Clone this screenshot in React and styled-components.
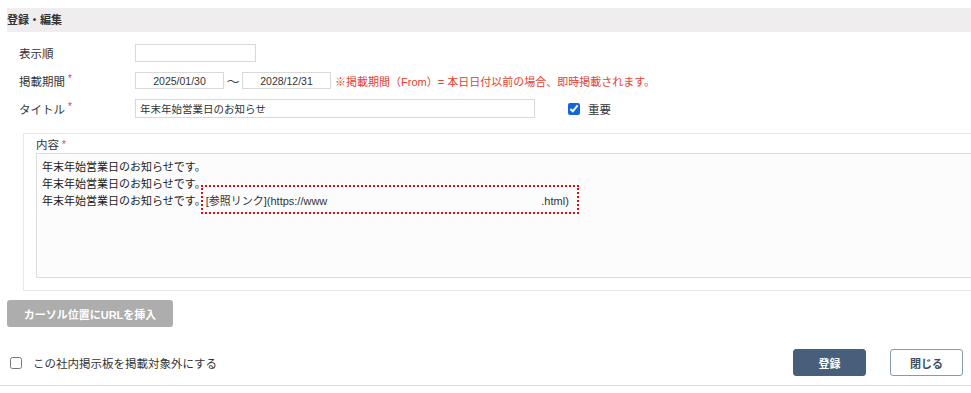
import React from "react"
import styled, { createGlobalStyle } from "styled-components";

const GlobalStyle = createGlobalStyle`
  html, body {
    margin: 0;
    padding: 0;
    background: #fff;
    overflow: hidden;
  }
  body {
    font-family: "Liberation Sans", "Noto Sans CJK JP", sans-serif;
    color: #333;
    font-size: 11px;
  }
`

const Page = styled.div`
  width: 971px;
  padding: 8px 0 0 7px;
  box-sizing: border-box;
  overflow: hidden;
`

const SectionHeader = styled.div`
  height: 24px;
  line-height: 24px;
  background: #efeded;
  font-weight: bold;
  font-size: 11px;
  color: #333;
`

const FormGrid = styled.div`
  display: grid;
  grid-template-columns: 116px 1fr;
  row-gap: 9px;
  align-items: center;
  margin-top: 12px;
  padding-left: 12px;
`

const Label = styled.div`
  font-size: 11.5px;
  color: #333;
`

const Required = styled.span`
  color: #e53e30;
  margin-left: 3px;
  font-size: 10px;
  vertical-align: top;
`

const Field = styled.div`
  display: flex;
  align-items: center;
`

const TextInput = styled.input`
  box-sizing: border-box;
  width: ${p => p.$w}px;
  height: ${p => p.$h || 18}px;
  border: 1px solid #d9d9d9;
  padding: 0 4px;
  font-family: "Liberation Sans", "Noto Sans CJK JP", sans-serif;
  font-size: 10.5px;
  color: #333;
  text-align: ${p => (p.$center ? "center" : "left")};
  outline: none;
  background: #fff;
`

const Tilde = styled.span`
  width: 18px;
  text-align: center;
  font-size: 13px;
  color: #444;
`

const Note = styled.span`
  margin-left: 4px;
  color: #e53e30;
  font-size: 11px;
`

const CheckLabel = styled.label`
  display: flex;
  align-items: center;
  margin-left: ${p => p.$ml || 0}px;
  font-size: 11.5px;
  color: #333;
  gap: ${p => p.$gap || 8}px;
`

const Check = styled.input`
  width: 12px;
  height: 12px;
  margin: 0;
  accent-color: #1267d6;
`

const ContentBox = styled.div`
  margin: 15px 0 0 16px;
  width: 1000px;
  border: 1px solid #e8e8e8;
  padding: 3px 0 12px 12px;
`

const ContentLabel = styled.div`
  height: 16px;
  line-height: 16px;
  font-size: 11.5px;
`

const Editor = styled.div`
  box-sizing: border-box;
  height: 125px;
  border: 1px solid #dcdcdc;
  background: #fcfcfc;
  padding: 5px 5px;
  font-size: 11px;
  line-height: 17px;
  color: #222;
`

const LinkText = styled.span`
  position: relative;
  color: #333;

  &::after {
    content: "";
    position: absolute;
    left: -5px;
    right: -10px;
    top: -10px;
    bottom: -7px;
    border: 2px dotted #d90f0f;
  }
`

const LinkGap = styled.span`
  display: inline-block;
  width: 214px;
`

const InsertButton = styled.button`
  display: block;
  margin-top: 9px;
  width: 166px;
  height: 27px;
  border: none;
  border-radius: 3px;
  background: #adadad;
  color: #fff;
  font-family: "Liberation Sans", "Noto Sans CJK JP", sans-serif;
  font-size: 11px;
  font-weight: bold;
`

const Footer = styled.div`
  display: flex;
  align-items: center;
  justify-content: space-between;
  margin: 22px 0 0 -7px;
  padding: 0 8px 9px 10px;
  border-bottom: 1px solid #dcdcdc;
`

const Actions = styled.div`
  display: flex;
  gap: 24px;
`

const ActionButton = styled.button`
  width: 73px;
  height: 27px;
  border-radius: 3px;
  border: 1px solid ${p => (p.$primary ? "#475f7b" : "#8799ae")};
  background: ${p => (p.$primary ? "#475f7b" : "#fff")};
  color: ${p => (p.$primary ? "#fff" : "#3e4c5e")};
  font-family: "Liberation Sans", "Noto Sans CJK JP", sans-serif;
  font-size: 11px;
  font-weight: bold;
`

const App = () => {
  return (
    <Page>
      <GlobalStyle />
      <SectionHeader>登録・編集</SectionHeader>

      <FormGrid>
        <Label>表示順</Label>
        <Field>
          <TextInput $w={121} defaultValue="" />
        </Field>

        <Label>掲載期間<Required>*</Required></Label>
        <Field>
          <TextInput $w={89} $h={17} $center defaultValue="2025/01/30" />
          <Tilde>〜</Tilde>
          <TextInput $w={89} $h={17} $center defaultValue="2028/12/31" />
          <Note>※掲載期間（From）= 本日日付以前の場合、即時掲載されます。</Note>
        </Field>

        <Label>タイトル<Required>*</Required></Label>
        <Field>
          <TextInput $w={400} $h={19} defaultValue="年末年始営業日のお知らせ" />
          <CheckLabel $ml={33} $gap={8}>
            <Check type="checkbox" defaultChecked />
            重要
          </CheckLabel>
        </Field>
      </FormGrid>

      <ContentBox>
        <ContentLabel>内容<Required>*</Required></ContentLabel>
        <Editor>
          <div>年末年始営業日のお知らせです。</div>
          <div>年末年始営業日のお知らせです。</div>
          <div>
            年末年始営業日のお知らせです。
            <LinkText>[参照リンク](https://www<LinkGap />.html)</LinkText>
          </div>
        </Editor>
      </ContentBox>

      <InsertButton>カーソル位置にURLを挿入</InsertButton>

      <Footer>
        <CheckLabel $gap={11}>
          <Check type="checkbox" />
          この社内掲示板を掲載対象外にする
        </CheckLabel>
        <Actions>
          <ActionButton $primary>登録</ActionButton>
          <ActionButton>閉じる</ActionButton>
        </Actions>
      </Footer>
    </Page>
  );
};

export default App
